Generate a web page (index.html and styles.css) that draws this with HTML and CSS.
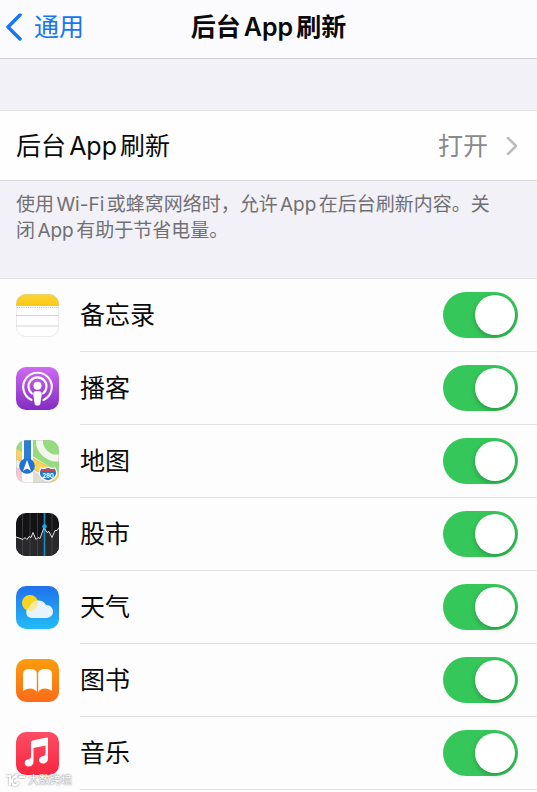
FILE: index.html
```
<!DOCTYPE html>
<html lang="zh-CN">

<head>
    <meta charset="UTF-8">
    <meta name="viewport" content="width=device-width, initial-scale=1.0">
    <title>后台App刷新</title>
    <link rel="stylesheet" href="styles.css">
</head>

<body>
    <div class="page">

        <!-- Navigation bar -->
        <header class="navbar">
            <a class="back" href="#">
                <svg class="back-arrow" viewBox="0 0 17 28" aria-hidden="true">
                    <path d="M15 2 L3 14 L15 26" />
                </svg>
                <span>通用</span>
            </a>
            <h1>后台App刷新</h1>
        </header>

        <!-- Global setting -->
        <a class="setting" href="#">
            <span>后台App刷新</span>
            <span class="setting-value">打开</span>
            <svg class="chevron" viewBox="0 0 12 18" aria-hidden="true">
                <path d="M2 1 L10 9 L2 17" />
            </svg>
        </a>
        <p class="note">使用Wi-Fi或蜂窝网络时，允许App在后台刷新内容。关闭App有助于节省电量。</p>

        <!-- App list -->
        <ul class="apps">
            <li class="app">
                <svg class="icon" viewBox="0 0 43 43" aria-hidden="true">
                    <defs>
                        <clipPath id="tile"><rect width="43" height="43" rx="10" /></clipPath>
                        <linearGradient id="yellow" x2="0" y2="1">
                            <stop offset="0" stop-color="#fbd437" />
                            <stop offset="1" stop-color="#fcc916" />
                        </linearGradient>
                    </defs>
                    <g clip-path="url(#tile)">
                        <rect width="43" height="43" fill="#fff" />
                        <rect width="43" height="11" fill="url(#yellow)" />
                        <path d="M0 11.5H43" stroke="#d6c482" />
                        <path d="M1 13.5H43" stroke="#b5b5b5" stroke-dasharray="1 1.2" />
                        <path d="M0 21.5H43M0 32H43" stroke="#d3d3d5" />
                    </g>
                    <rect x=".5" y=".5" width="42" height="42" rx="9.5" fill="none" stroke="#ccc" stroke-opacity=".4" />
                </svg>
                <div class="app-row">
                    <label for="notes">备忘录</label>
                    <input class="switch" type="checkbox" id="notes" checked>
                </div>
            </li>
            <li class="app">
                <svg class="icon" viewBox="0 0 43 43" aria-hidden="true">
                    <defs>
                        <linearGradient id="purple" x2="0" y2="1">
                            <stop offset="0" stop-color="#cf6af3" />
                            <stop offset="1" stop-color="#832bc1" />
                        </linearGradient>
                    </defs>
                    <rect width="43" height="43" rx="10" fill="url(#purple)" />
                    <g fill="none" stroke="#fff" stroke-width="2.1" stroke-linecap="round">
                        <path d="M15.5 33A14.3 14.3 0 1 1 27.5 33" />
                        <path d="M16 26.5A9 9 0 1 1 27 26.5" />
                    </g>
                    <circle cx="21.5" cy="18.7" r="4" fill="#fff" />
                    <path d="M21.5 24c3.200 0 4.500 1 4.200 3.500l-1.200 8.500c-.3 1.900-1.200 2.600-3 2.600s-2.700-.7-3-2.600l-1.200-8.500c-.3-2.500 1-3.500 4.200-3.500z" fill="#fff" />
                </svg>
                <div class="app-row">
                    <label for="podcasts">播客</label>
                    <input class="switch" type="checkbox" id="podcasts" checked>
                </div>
            </li>
            <li class="app">
                <svg class="icon" viewBox="0 0 43 43" aria-hidden="true">
                    <g clip-path="url(#tile)">
                        <rect width="43" height="43" fill="#f2efe6" />
                        <path d="M15 0H43V33L15 15z" fill="#94dd7d" />
                        <path d="M24-3a17 17 0 0 0 22 20" fill="none" stroke="#f5f4ee" stroke-width="7" />
                        <path d="M0 0H6V13L0 9z" fill="#94dd7d" />
                        <path d="M0 27L17 36V43H0z" fill="#f8c6d2" />
                        <path d="M16 31L43 43H16z" fill="#dfddd2" />
                        <path d="M-1 13L44 39" stroke="#f0bd43" stroke-width="10" />
                        <path d="M-1 13L44 39" stroke="#fcd45c" stroke-width="8" />
                        <path d="M6 0H17V43H6z" fill="#fff" />
                        <path d="M8 0H15V26H8z" fill="#2e7bd8" />
                        <circle cx="11" cy="26" r="7.8" fill="#1f73d6" />
                        <path d="M11 20L15 31L11 28.5L7 31z" fill="#fff" />
                        <path d="M25 28q3 1 7-.8q4 1.800 7 .8c3 5 2.500 10-7 13c-9.500-3-10-8-7-13z" fill="#2e73bd" stroke="#fff" stroke-width="1.2" />
                        <path d="M26 29q3 .5 6-.8q3 1.300 6 .8l1 2.500H25z" fill="#d8434b" />
                        <text class="shield" x="32" y="37.5">280</text>
                    </g>
                    <rect x=".5" y=".5" width="42" height="42" rx="9.5" fill="none" stroke="#bbb" stroke-opacity=".35" />
                </svg>
                <div class="app-row">
                    <label for="maps">地图</label>
                    <input class="switch" type="checkbox" id="maps" checked>
                </div>
            </li>
            <li class="app">
                <svg class="icon" viewBox="0 0 43 43" aria-hidden="true">
                    <g clip-path="url(#tile)">
                        <rect width="43" height="43" fill="#131315" />
                        <path d="M0 24l3 1 4 1.500 2-2 2 2 2-3 2 1 2-5 3 7 2-2 2 1 4-11 3 5 2-1 3 6 3-7 2 0 2-3V43H0z" fill="#29292b" />
                        <path d="M6.500 0V43M14 0V43M21.500 0V43M36 0V43" stroke="#4b4b50" stroke-width=".7" />
                        <path d="M28.500 0V43" stroke="#168abf" stroke-width="1.7" />
                        <path d="M0 24l3 1 4 1.500 2-2 2 2 2-3 2 1 2-5 3 7 2-2 2 1 4-11 3 5 2-1 3 6 3-7 2 0 2-3" fill="none" stroke="#e0e0e0" />
                        <circle cx="28.5" cy="13.5" r="2.3" fill="#20a6e2" />
                    </g>
                </svg>
                <div class="app-row">
                    <label for="stocks">股市</label>
                    <input class="switch" type="checkbox" id="stocks" checked>
                </div>
            </li>
            <li class="app">
                <svg class="icon" viewBox="0 0 43 43" aria-hidden="true">
                    <defs>
                        <linearGradient id="sky" x2="0" y2="1">
                            <stop offset="0" stop-color="#2070ee" />
                            <stop offset="1" stop-color="#23bcf5" />
                        </linearGradient>
                        <clipPath id="sun"><circle cx="14" cy="17" r="8" /></clipPath>
                    </defs>
                    <rect width="43" height="43" rx="10" fill="url(#sky)" />
                    <circle cx="14" cy="17" r="8" fill="#fcd31d" />
                    <path d="M15.500 32a5.500 5.500 0 0 1-2-10.500A9 9 0 0 1 30 19a6.500 6.500 0 1 1 1 13z" fill="#e7f4fd" />
                    <path d="M15.500 32a5.500 5.500 0 0 1-2-10.500A9 9 0 0 1 30 19V32z" fill="#f9e9a0" clip-path="url(#sun)" />
                </svg>
                <div class="app-row">
                    <label for="weather">天气</label>
                    <input class="switch" type="checkbox" id="weather" checked>
                </div>
            </li>
            <li class="app">
                <svg class="icon" viewBox="0 0 43 43" aria-hidden="true">
                    <defs>
                        <linearGradient id="orange" x2="0" y2="1">
                            <stop offset="0" stop-color="#fd9c0b" />
                            <stop offset="1" stop-color="#f96c1b" />
                        </linearGradient>
                    </defs>
                    <rect width="43" height="43" rx="10" fill="url(#orange)" />
                    <path d="M7 14.500Q7 10 14 10Q20.800 10 20.800 14.500V33Q19 29.500 14 29.500Q9.500 29.500 7 32zM36 14.500Q36 10 29 10Q22.200 10 22.200 14.500V33Q24 29.500 29 29.500Q33.500 29.500 36 32z" fill="#fff" />
                </svg>
                <div class="app-row">
                    <label for="books">图书</label>
                    <input class="switch" type="checkbox" id="books" checked>
                </div>
            </li>
            <li class="app">
                <svg class="icon" viewBox="0 0 43 43" aria-hidden="true">
                    <defs>
                        <linearGradient id="red" x2="0" y2="1">
                            <stop offset="0" stop-color="#fb4e63" />
                            <stop offset="1" stop-color="#f8253f" />
                        </linearGradient>
                    </defs>
                    <rect width="43" height="43" rx="10" fill="url(#red)" />
                    <path d="M15 10.500Q15 8.800 16.700 8.400L30.500 5.600Q32 5.400 32 7V26.500C32 30 29.500 31.500 27 31.500C24.500 31.500 23 30 23 28C23 25.500 25 24.500 27.500 24Q29.500 23.700 29.500 22V13.500L17.500 16V29.500C17.500 33 15 34.500 12.700 34.500C10.300 34.500 8.700 33 8.700 31C8.700 28.500 10.500 27.500 13 27Q15 26.600 15 25z" fill="#fff" />
                </svg>
                <div class="app-row">
                    <label for="music">音乐</label>
                    <input class="switch" type="checkbox" id="music" checked>
                </div>
            </li>
        </ul>

        <div class="watermark">
            <svg class="watermark-logo" viewBox="0 0 20 14" aria-hidden="true">
                <path d="M1 3H4V12M11 4Q6 3 6 8Q6 12 9 12Q12 12 12 9M9 3L12 1M13 4H19" />
            </svg>
            <span>大数跨境</span>
        </div>
    </div>
</body>

</html>
```

FILE: styles.css
```
* {
    box-sizing: border-box;
}

body {
    margin: 0;
    background-color: #fdfdfd;
    color: #0a0a0a;
    font-family: Inter, "Noto Sans CJK SC", sans-serif;
    font-size: 25px;
    line-height: 36px;
    text-autospace: normal;
}

a {
    color: inherit;
    text-decoration: none;
}

.page {
    position: relative;
    min-height: 100vh;
}

/* Navigation bar */
.navbar {
    display: grid;
    grid-template-columns: 1fr auto 1fr;
    align-items: center;
    height: 59px;
    padding: 0 5px 4px;
    background-color: #fbfbfd;
    border-bottom: 1px solid #d2d2d5;
}

.navbar h1 {
    margin: 0;
    font-size: 25px;
    font-weight: 600;
}

.back {
    display: flex;
    align-items: center;
    gap: 12px;
    color: #1677f2;
}

.back-arrow {
    width: 17px;
    height: 28px;
    fill: none;
    stroke: #1677f2;
    stroke-width: 3.5;
    stroke-linecap: round;
    stroke-linejoin: round;
}

/* Global setting */
.setting {
    display: flex;
    align-items: center;
    height: 71px;
    margin-top: 51px;
    padding: 0 19px 0 16px;
    background-color: #fefefe;
    border-top: 1px solid #e3e3e7;
    border-bottom: 1px solid #dcdce0;
    box-shadow: 0 -51px #f2f1f7;
}

.setting-value {
    margin-left: auto;
    color: #8a8a8d;
}

.chevron {
    width: 12px;
    height: 18px;
    margin-left: 18px;
    fill: none;
    stroke: #bcbcc0;
    stroke-width: 2.5;
    stroke-linecap: round;
    stroke-linejoin: round;
}

.note {
    margin: 0;
    padding: 11px 32px 34px 16px;
    background-color: #f2f1f7;
    border-bottom: 1px solid #e3e3e7;
    color: #707074;
    font-size: 19px;
    line-height: 26px;
}

/* App list */
.apps {
    margin: 0;
    padding: 0;
    list-style: none;
}

.app {
    display: flex;
    align-items: center;
    gap: 21px;
    padding-left: 16px;
}

.icon {
    flex: none;
    width: 43px;
    height: 43px;
}

.shield {
    fill: #fff;
    font-size: 6px;
    font-weight: 700;
    text-anchor: middle;
}

.app-row {
    display: flex;
    flex: 1;
    align-items: center;
    justify-content: space-between;
    height: 73px;
    padding-right: 19px;
    border-bottom: 1px solid #e2e2e4;
}

.switch {
    appearance: none;
    width: 75px;
    height: 46px;
    margin: 0;
    padding: 3px;
    border-radius: 23px;
    background-color: #e9e9ea;
    cursor: pointer;
}

.switch::before {
    content: "";
    display: block;
    width: 40px;
    height: 40px;
    border-radius: 50%;
    background-color: #fff;
    box-shadow: 0 2px 5px rgba(0, 0, 0, 0.25);
}

.switch:checked {
    background-color: #35c759;
}

.switch:checked::before {
    margin-left: auto;
}

/* Watermark */
.watermark {
    position: absolute;
    bottom: 4px;
    left: 6px;
    display: flex;
    align-items: center;
    gap: 2px;
    color: #fff;
    font-size: 11px;
    line-height: 16px;
    text-shadow: 0 0 1px #888, 0 0 2px #999;
}

.watermark-logo {
    width: 20px;
    height: 14px;
    fill: none;
    stroke: #fff;
    stroke-width: 2;
    filter: drop-shadow(0 0 1px #888);
}
```
